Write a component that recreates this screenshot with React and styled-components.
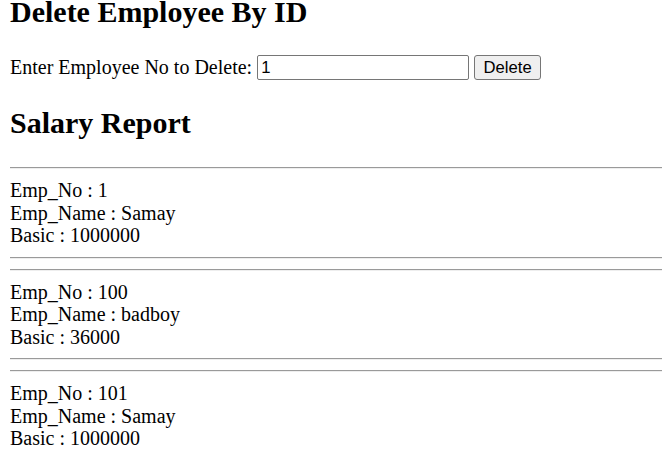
import React from "react";
import styled, { createGlobalStyle } from "styled-components";

const Global = createGlobalStyle`
  html, body { margin: 0; padding: 0; background: #fff; }
  body {
    font-family: "Liberation Serif", "Times New Roman", serif;
    font-size: 20px;
    color: #000;
  }
`;

const Page = styled.div`
  padding: 0 0 0 10px;
`;

const Title = styled.h2`
  font-size: 30px;
  font-weight: bold;
  line-height: ${(p) => p.$lh || "normal"};
  margin: ${(p) => p.$margin || "0"};
`;

const FormRow = styled.form`
  display: flex;
  align-items: center;
  gap: 4px;
  margin: 31px 0 0;
  height: 25px;
`;

const Label = styled.label`
  white-space: nowrap;
  line-height: normal;
`;

const Input = styled.input`
  box-sizing: border-box;
  width: 212px;
  height: 25px;
  margin: 0 0 0 1px;
  padding: 1px 3px;
  border: 1px solid #767676;
  border-radius: 2px;
  font-family: "Liberation Sans", Arial, sans-serif;
  font-size: 16.67px;
  color: #000;
  background: #fff;
  outline: none;
`;

const Button = styled.button`
  box-sizing: border-box;
  height: 25px;
  width: 67px;
  margin-left: 1px;
  padding: 1px 8px;
  border: 1px solid #767676;
  border-radius: 3px;
  background: #efefef;
  font-family: "Liberation Sans", Arial, sans-serif;
  font-size: 16.67px;
  color: #000;
`;

const Rule = styled.hr`
  margin: 10px 0;
  height: 0;
  border: 0;
  border-top: 1px solid #9a9a9a;
  border-bottom: 1px solid #eeeeee;
`;

const Record = styled.div`
  line-height: 22.5px;
`;

const employees = [
  { no: 1, name: "Samay", basic: 1000000 },
  { no: 100, name: "badboy", basic: 36000 },
  { no: 101, name: "Samay", basic: 1000000 },
];

export default function App() {
  return (
    <>
      <Global />
      <Page>
        <Title $lh="24px">Delete Employee By ID</Title>
        <FormRow onSubmit={(e) => e.preventDefault()}>
          <Label htmlFor="empno">Enter Employee No to Delete:</Label>
          <Input id="empno" defaultValue="1" />
          <Button type="submit">Delete</Button>
        </FormRow>
        <Title $margin="26px 0 27px">Salary Report</Title>
        {employees.map((e) => (
          <React.Fragment key={e.no}>
            <Rule />
            <Record>
              <div>Emp_No : {e.no}</div>
              <div>Emp_Name : {e.name}</div>
              <div>Basic : {e.basic}</div>
            </Record>
            <Rule />
          </React.Fragment>
        ))}
      </Page>
    </>
  );
}
